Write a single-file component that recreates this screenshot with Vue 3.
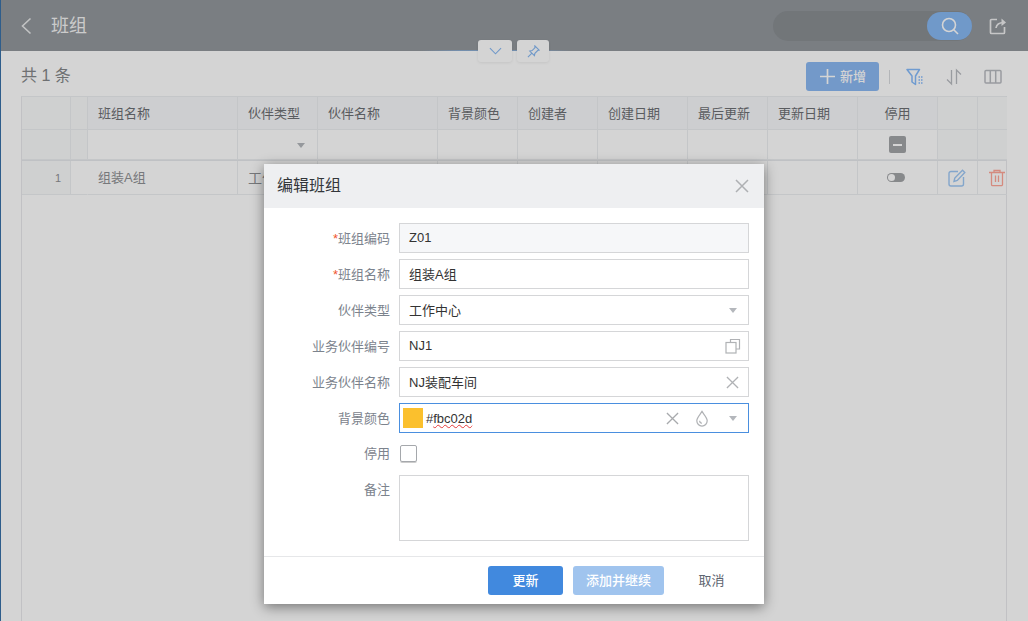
<template>
  <div class="page">
    <!-- 顶部栏 -->
    <header class="topbar">
      <svg class="back" viewBox="0 0 12 18" width="12" height="18"><path d="M10.5 1.5 2.5 9l8 7.5" fill="none" stroke="currentColor" stroke-width="1.6" /></svg>
      <span class="page-title">班组</span>
      <div class="search">
        <button class="search-btn">
          <svg viewBox="0 0 18 18" width="18" height="18"><circle cx="8" cy="8" r="6.500" fill="none" stroke="#fff" stroke-width="1.6" /><path d="m12.500 12.500 4.500 4.500" stroke="#fff" stroke-width="1.6" /></svg>
        </button>
      </div>
      <svg class="share" viewBox="0 0 18 18" width="18" height="18">
        <path d="M8 2.500H2.500a1 1 0 0 0-1 1v12a1 1 0 0 0 1 1h12a1 1 0 0 0 1-1V10" fill="none" stroke="currentColor" stroke-width="1.700" />
        <path d="M7 11c.5-3.500 3-5.500 8-5.500" fill="none" stroke="currentColor" stroke-width="1.700" />
        <path d="m12.500 1.500 4.500 4-4.500 3.500z" fill="currentColor" />
      </svg>
      <div class="pull-line"></div>
      <div class="pull-tabs">
        <span class="pull-tab wide">
          <svg viewBox="0 0 14 8" width="13" height="8"><path d="m1 1 6 6 6-6" fill="none" stroke="#87b8f2" stroke-width="1.200" /></svg>
        </span>
        <span class="pull-tab">
          <svg viewBox="0 0 14 14" width="13" height="13"><path d="M8.500 1 13 5.500l-1.500.5-3 3-.5 2.500L3 6.500l2.500-.5 3-3zM5 9l-4 4" fill="none" stroke="#87b8f2" stroke-width="1.200" /></svg>
        </span>
      </div>
    </header>

    <main class="content">
      <div class="toolbar">
        <span class="count">共 1 条</span>
        <button class="add-btn">
          <svg viewBox="0 0 16 16" width="15" height="15"><path d="M8 0v16M0 8h16" stroke="#fff" stroke-width="1.800" /></svg>
          <span>新增</span>
        </button>
        <span class="tool-sep"></span>
        <svg class="tool blue" viewBox="0 0 18 18" width="18" height="18">
          <path d="M1 1.500h12.500L9.500 8v8.500L6 14V8z" fill="none" stroke="currentColor" stroke-width="1.500" stroke-linejoin="round" />
          <path d="M12.500 9h4M12.500 12h4M12.500 15h4" stroke="currentColor" stroke-width="1.500" stroke-dasharray="1.500 1" />
        </svg>
        <svg class="tool" viewBox="0 0 18 18" width="18" height="18">
          <path d="M6.500 2v14L2 11.500M11.500 16V2L16 6.500" fill="none" stroke="currentColor" stroke-width="1.300" />
        </svg>
        <svg class="tool" viewBox="0 0 18 16" width="18" height="16">
          <rect x="1" y="1.500" width="16" height="12.500" rx="1" fill="none" stroke="currentColor" stroke-width="1.500" />
          <path d="M6.300 1.500V14M11.700 1.500V14" stroke="currentColor" stroke-width="1.500" />
        </svg>
      </div>

      <div class="table">
        <div class="row head">
          <div v-for="col in columns" :key="col.key" class="cell" :class="col.cls"><span class="txt">{{ col.title }}</span></div>
        </div>
        <div class="row filter">
          <div v-for="col in columns" :key="col.key" class="cell" :class="col.cls">
            <i v-if="col.key === 'type'" class="caret filter-caret"></i>
            <span v-if="col.key === 'disabled'" class="minus-box"></span>
          </div>
        </div>
        <div class="row data">
          <div class="cell shade num">1</div>
          <div class="cell no-line"></div>
          <div class="cell pad"><span class="txt">组装A组</span></div>
          <div class="cell pad type-text"><span class="txt">工作中心</span></div>
          <div class="cell pad" v-for="n in 6" :key="n"></div>
          <div class="cell center">
            <span class="toggle"><i></i></span>
          </div>
          <div class="cell center edit-cell">
            <svg viewBox="0 0 18 18" width="18" height="18" class="blue-icon">
              <path d="M10 2.500H3a2 2 0 0 0-2 2V15a2 2 0 0 0 2 2h10.500a2 2 0 0 0 2-2V8" fill="none" stroke="currentColor" stroke-width="1.400" />
              <path d="M6 12.500 6.800 9 14.500 1.300l2.300 2.300L9.300 11.500z" fill="none" stroke="currentColor" stroke-width="1.400" />
            </svg>
          </div>
          <div class="cell del-cell">
            <svg viewBox="0 0 16 18" width="16" height="18" class="red-icon">
              <path d="M0 3.500h16M5 3.500V1.500h6v2M2.500 3.500V15.500a1.200 1.200 0 0 0 1.200 1.200h8.600a1.200 1.200 0 0 0 1.200-1.200V3.500M6.500 6.500v6.500M9.500 6.500v6.500" fill="none" stroke="currentColor" stroke-width="1.300" />
            </svg>
          </div>
        </div>
        <div class="row rest">
          <div class="cell"></div>
        </div>
      </div>
    </main>

    <!-- 弹窗 -->
    <div class="mask">
      <section class="dialog">
        <div class="dialog-head">
          <span class="txt">编辑班组</span>
          <svg viewBox="0 0 14 14" width="14" height="14" class="icon-x"><path d="m1 1 12 12M13 1 1 13" stroke="currentColor" stroke-width="1.500" /></svg>
        </div>
        <div class="dialog-body">
          <div class="form-row">
            <label class="label"><em>*</em>班组编码</label>
            <div class="field readonly"><span class="txt">Z01</span></div>
          </div>
          <div class="form-row">
            <label class="label"><em>*</em>班组名称</label>
            <div class="field"><span class="txt">组装A组</span></div>
          </div>
          <div class="form-row">
            <label class="label">伙伴类型</label>
            <div class="field"><span class="txt">工作中心</span><i class="caret"></i></div>
          </div>
          <div class="form-row">
            <label class="label">业务伙伴编号</label>
            <div class="field">
              <span class="txt">NJ1</span>
              <svg viewBox="0 0 16 16" width="16" height="16" class="icon-r">
                <path d="M5.500 4V1.500h9V11H11" fill="none" stroke="currentColor" stroke-width="1.200" />
                <rect x="1" y="4.500" width="10" height="10.500" fill="none" stroke="currentColor" stroke-width="1.200" />
              </svg>
            </div>
          </div>
          <div class="form-row">
            <label class="label">业务伙伴名称</label>
            <div class="field">
              <span class="txt">NJ装配车间</span>
              <svg viewBox="0 0 14 14" width="13" height="13" class="icon-r x"><path d="m1 1 12 12M13 1 1 13" stroke="currentColor" stroke-width="1.400" /></svg>
            </div>
          </div>
          <div class="form-row">
            <label class="label">背景颜色</label>
            <div class="field focus">
              <span class="swatch"></span>
              <span class="hash">#<span class="wavy">fbc02d</span></span>
              <svg viewBox="0 0 14 14" width="13" height="13" class="color-x"><path d="m1 1 12 12M13 1 1 13" stroke="currentColor" stroke-width="1.400" /></svg>
              <svg viewBox="0 0 14 18" width="14" height="17" class="drop">
                <path d="M7 1.500C5 5 1.500 8 1.500 11.500a5.500 5.500 0 0 0 11 0C12.500 8 9 5 7 1.500z" fill="none" stroke="currentColor" stroke-width="1.300" />
                <path d="M4.500 11.500A2.500 2.500 0 0 0 7 14" fill="none" stroke="currentColor" stroke-width="1.200" />
              </svg>
              <i class="caret"></i>
            </div>
          </div>
          <div class="form-row check-row">
            <label class="label">停用</label>
            <span class="checkbox"></span>
          </div>
          <div class="form-row note-row">
            <label class="label">备注</label>
            <div class="field note"></div>
          </div>
        </div>
        <div class="dialog-foot">
          <button class="btn primary"><span class="txt">更新</span></button>
          <button class="btn light"><span class="txt">添加并继续</span></button>
          <button class="btn plain"><span class="txt">取消</span></button>
        </div>
      </section>
    </div>
  </div>
</template>

<script setup>
// 表格列
const columns = [
  { key: 'no', title: '', cls: 'shade' },
  { key: 'sel', title: '', cls: 'shade' },
  { key: 'name', title: '班组名称', cls: 'pad' },
  { key: 'type', title: '伙伴类型', cls: 'pad' },
  { key: 'partner', title: '伙伴名称', cls: 'pad' },
  { key: 'color', title: '背景颜色', cls: 'pad' },
  { key: 'creator', title: '创建者', cls: 'pad' },
  { key: 'created', title: '创建日期', cls: 'pad' },
  { key: 'last', title: '最后更新', cls: 'pad' },
  { key: 'updated', title: '更新日期', cls: 'pad' },
  { key: 'disabled', title: '停用', cls: 'center' },
  { key: 'edit', title: '', cls: 'shade' },
  { key: 'del', title: '', cls: 'shade' }
]
</script>

<style>
html, body {
  margin: 0;
  overflow: hidden;
}
</style>

<style scoped>
.page {
  position: relative;
  display: flex;
  flex-direction: column;
  height: 621px;
  background: #fff;
  border-left: 1px solid #2e5d8b;
  box-sizing: border-box;
  overflow: hidden;
  font-family: "Liberation Sans", "Noto Sans CJK SC", sans-serif;
  font-size: 13px;
  color: #6b6d70;
}

/* CJK glyphs sit low in this font, lift them a bit */
.txt {
  position: relative;
  top: -1px;
}

.topbar {
  position: relative;
  display: flex;
  align-items: center;
  flex: none;
  height: 51px;
  padding: 0 21px 0 19px;
  box-sizing: border-box;
  background: #93989d;
  color: #fff;
}

.back {
  opacity: 0.8;
  margin-right: 19px;
}

.page-title {
  position: relative;
  top: -2px;
  font-size: 18px;
  opacity: 0.9;
}

.search {
  display: flex;
  justify-content: flex-end;
  width: 199px;
  height: 30px;
  margin-left: auto;
  border-radius: 15px;
  background: #8a8e92;
}

.search-btn {
  display: flex;
  align-items: center;
  justify-content: center;
  width: 45px;
  height: 28px;
  margin-top: 1px;
  padding: 0;
  border: 0;
  border-radius: 14px;
  background: #87b8f2;
}

.share {
  margin-left: 17px;
  opacity: 0.85;
}

.pull-line {
  position: absolute;
  left: 420px;
  bottom: 0;
  width: 150px;
  height: 1px;
  opacity: 0.6;
  background: linear-gradient(to right, transparent, #87b8f2 25%, #87b8f2 75%, transparent);
}

.pull-tabs {
  position: absolute;
  top: 40px;
  left: 477px;
  display: flex;
  gap: 5px;
}

.pull-tab {
  display: flex;
  align-items: center;
  justify-content: center;
  width: 32px;
  height: 22px;
  border-radius: 3px;
  background: #fff;
  box-shadow: 0 1px 3px rgba(0, 0, 0, 0.08);
}

.pull-tab.wide {
  width: 34px;
}

.content {
  display: flex;
  flex-direction: column;
  flex: 1;
  min-height: 0;
  padding: 11px 21px 0 20px;
}

.toolbar {
  display: flex;
  align-items: center;
  height: 29px;
  margin-bottom: 5px;
  padding-right: 5px;
}

.count {
  position: relative;
  top: -3px;
  margin-right: auto;
  font-size: 16px;
  color: #85878a;
}

.add-btn {
  display: flex;
  align-items: center;
  gap: 5px;
  width: 73px;
  height: 29px;
  padding: 0 0 0 14px;
  border: 0;
  border-radius: 3px;
  background: #8bb8f2;
  color: #fff;
  font: inherit;
  font-weight: 500;
}

.add-btn span {
  position: relative;
  top: -1px;
}

.tool-sep {
  width: 1px;
  height: 14px;
  margin: 0 16px 0 10px;
  background: #d8dade;
}

.tool {
  margin-left: 21px;
  color: #b9bcc1;
}

.tool.blue {
  margin-left: 0;
  color: #86bbfb;
}

.table {
  display: flex;
  flex-direction: column;
  flex: 1;
  min-height: 0;
  border-top: 1px solid #eceef1;
  border-left: 1px solid #e8e9ec;
  border-right: 1px solid #e8e9ec;
}

.row {
  display: grid;
  grid-template-columns: 49px 17px 150px 80px 120px 80px 80px 90px 80px 90px 80px 40px 29px;
  flex: none;
  box-sizing: border-box;
}

.cell {
  display: flex;
  align-items: center;
  box-sizing: border-box;
  min-width: 0;
  border-right: 1px solid #eceef1;
  border-bottom: 1px solid #eceef1;
}

.cell:last-child {
  border-right: 0;
}

.pad {
  padding-left: 10px;
  white-space: nowrap;
  overflow: hidden;
}

.center {
  justify-content: center;
}

.shade {
  background: #f9fafb;
}

.head {
  height: 33px;
  background: #f7f8fb;
  color: #6d6f73;
}

.filter {
  height: 31px;
  border-bottom: 1px solid #e6e8ec;
}

.data {
  height: 34px;
  color: #8f9194;
  font-size: 13px;
}

.num {
  justify-content: flex-end;
  padding-right: 9px;
  font-size: 11px;
}

.no-line {
  border-right-color: transparent;
}

.type-text {
  font-size: 14px;
}

.edit-cell {
  padding-right: 2px;
}

.del-cell {
  padding-left: 11px;
}

.rest {
  flex: 1;
}

.rest .cell {
  height: 100%;
  border-bottom: 0;
  border-right-color: #e8e9ec;
  background: #fff;
}

.caret {
  position: absolute;
  width: 0;
  height: 0;
  right: 11px;
  top: 50%;
  margin-top: -2px;
  border-left: 4.500px solid transparent;
  border-right: 4.500px solid transparent;
  border-top: 5px solid #b4b7bc;
}

.filter .cell {
  position: relative;
}

.filter-caret {
  right: 12px;
}

.minus-box {
  position: relative;
  width: 17px;
  height: 17px;
  border-radius: 2px;
  background: #a3a5a8;
}

.minus-box::after {
  content: "";
  position: absolute;
  left: 4px;
  right: 4px;
  top: 7.500px;
  height: 2px;
  background: #fff;
}

.toggle {
  position: relative;
  display: block;
  width: 18px;
  height: 9px;
  margin-right: 3px;
  border-radius: 5px;
  background: #a3a5a8;
}

.toggle i {
  position: absolute;
  left: 1px;
  top: 1px;
  width: 7px;
  height: 7px;
  border-radius: 50%;
  background: #fff;
}

.blue-icon {
  color: #9fc8f5;
}

.red-icon {
  color: #ffa698;
}

.mask {
  position: absolute;
  inset: 0;
  display: flex;
  justify-content: center;
  align-items: flex-start;
  background: rgba(0, 0, 0, 0.17);
}

.dialog {
  display: flex;
  flex-direction: column;
  width: 500px;
  height: 440px;
  margin-top: 164px;
  margin-right: 1px;
  background: #fff;
  box-shadow: 0 3px 12px rgba(0, 0, 0, 0.45);
}

.dialog-head {
  display: flex;
  align-items: center;
  justify-content: space-between;
  flex: none;
  height: 44px;
  padding: 0 15px 0 13px;
  background: #eeeff1;
  font-size: 16px;
  color: #33363a;
}

.dialog-head .txt {
  top: -2px;
}

.icon-x {
  color: #aeb0b3;
}

.dialog-body {
  flex: 1;
  padding: 15px 15px 0 0;
  display: flex;
  flex-direction: column;
  gap: 6px;
}

.form-row {
  display: flex;
  align-items: center;
}

.label {
  position: relative;
  top: -1px;
  flex: none;
  width: 126px;
  margin-right: 9px;
  text-align: right;
  color: #7c838d;
}

.label em {
  font-style: normal;
  color: #f0552e;
}

.field {
  position: relative;
  display: flex;
  align-items: center;
  flex: 1;
  height: 30px;
  padding-left: 9px;
  box-sizing: border-box;
  border: 1px solid #d5d6d8;
  color: #333;
}

.readonly {
  background: #f6f7f9;
}

.icon-r {
  position: absolute;
  right: 7px;
  color: #b0b2b5;
}

.icon-r.x {
  right: 9px;
}

.focus {
  padding-left: 3px;
  border-color: #4a8fdf;
}

.swatch {
  width: 20px;
  height: 20px;
  margin-right: 3px;
  background: #fbc02d;
}

.wavy {
  text-decoration: underline wavy #e43a3a 1px;
}

.color-x {
  position: absolute;
  right: 69px;
  color: #a8aaad;
}

.drop {
  position: absolute;
  right: 39px;
  color: #b0b2b5;
}

.check-row {
  height: 30px;
}

.check-row .label {
  top: -2px;
}

.checkbox {
  width: 15px;
  height: 15px;
  margin-left: 1px;
  margin-top: -1px;
  border: 1px solid #a5a8ac;
  border-radius: 2px;
  box-shadow: 0 1px 0 #ccc;
}

.note-row {
  align-items: flex-start;
}

.note-row .label {
  top: 0;
  margin-top: 4px;
}

.note {
  height: 66px;
}

.dialog-foot {
  display: flex;
  align-items: center;
  flex: none;
  box-sizing: border-box;
  height: 48px;
  padding: 0 0 0 224px;
  border-top: 1px solid #e6e7e9;
}

.btn {
  height: 29px;
  margin-right: 10px;
  padding: 0;
  border: 0;
  border-radius: 3px;
  color: #fff;
  font: inherit;
  font-size: 13px;
  font-weight: 500;
}

.primary {
  width: 75px;
  background: #4189de;
}

.light {
  width: 91px;
  background: #a0c4ee;
}

.plain {
  width: 75px;
  background: transparent;
  color: #5d6570;
  font-weight: normal;
}
</style>
